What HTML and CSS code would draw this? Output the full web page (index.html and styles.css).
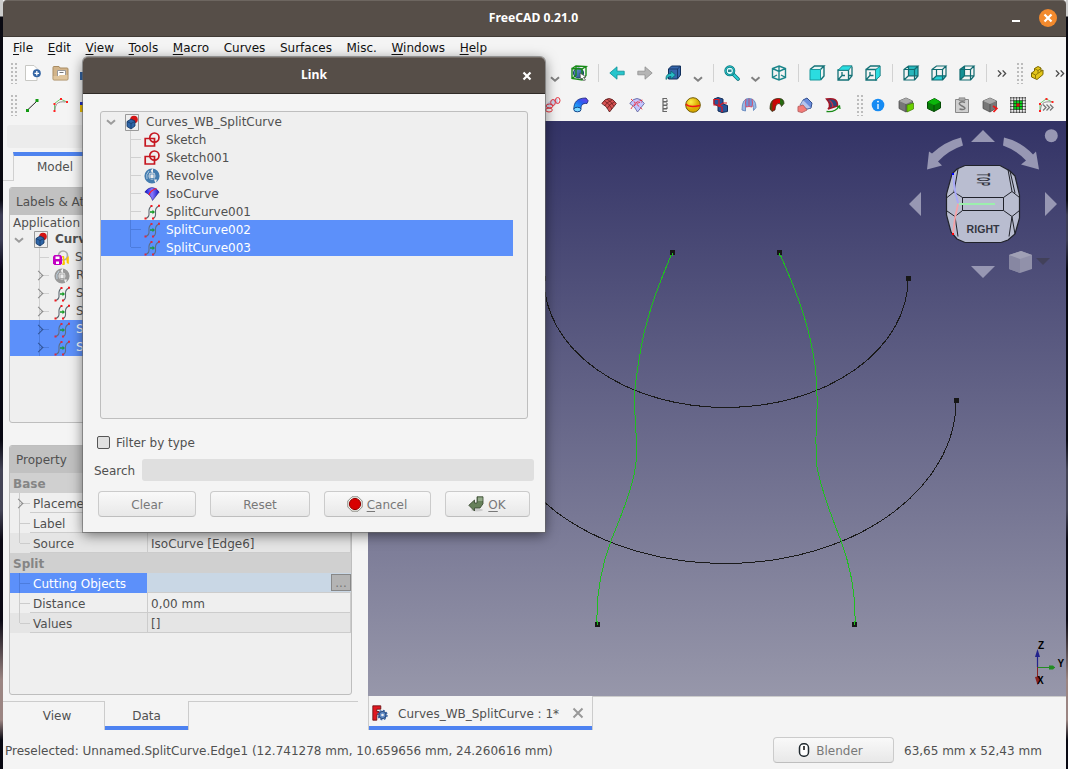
FILE: index.html
```html
<!DOCTYPE html>
<html lang="en">
<head>
<meta charset="utf-8">
<title>FreeCAD 0.21.0</title>
<link rel="stylesheet" href="styles.css">
</head>
<body>
<svg class="defs" width="0" height="0" aria-hidden="true">
  <defs>
    <linearGradient id="gBlue" x1="0" y1="0" x2="1" y2="1"><stop offset="0" stop-color="#6fa0d8"/><stop offset="1" stop-color="#1d4a86"/></linearGradient>
    <linearGradient id="gPipe" x1="0" y1="1" x2="1" y2="0"><stop offset="0" stop-color="#1cc7ff"/><stop offset=".55" stop-color="#2660ee"/><stop offset="1" stop-color="#7c35ea"/></linearGradient>
    <linearGradient id="gIso" x1="0" y1="0" x2="1" y2="0"><stop offset="0" stop-color="#0a10d8"/><stop offset=".5" stop-color="#8a7cff"/><stop offset="1" stop-color="#1014c0"/></linearGradient>
    <linearGradient id="gRedGreen"><stop offset="0" stop-color="#246b08"/><stop offset=".25" stop-color="#c00808"/><stop offset=".7" stop-color="#d00"/><stop offset=".75" stop-color="#276b10"/></linearGradient>
    <radialGradient id="gYellow" cx=".35" cy=".3"><stop offset="0" stop-color="#fff04a"/><stop offset="1" stop-color="#d9a900"/></radialGradient>
  </defs>
  <symbol id="new" viewBox="0 0 16 16"><path d="M.5.500h8.500l3 3v12H.5z" fill="#fff" stroke="#c8c8c4"/><circle cx="11.800" cy="8.300" r="4" fill="#3465a4"/><path d="M11.800 6v4.600M9.500 8.300h4.600" stroke="#fff" stroke-width="1.300"/></symbol>
  <symbol id="open" viewBox="0 0 16 16"><path d="M.5 2.500q0-1 1-1h5l1 1.500h7q1 0 1 1v10q0 1-1 1h-13q-1 0-1-1z" fill="#d2b48a" stroke="#a98c62"/><path d="M5 5.500h8v5H8l-3 2z" fill="#fff" stroke="#999"/><path d="M7 7.500h4" stroke="#777"/><path d="M1 11h5l2-1h7v4.500H1z" fill="#e0c59c"/></symbol>
  <symbol id="save" viewBox="0 0 16 16"><path d="M0 7h15v8H0z" fill="#3465a4"/></symbol>
  <symbol id="line" viewBox="0 0 16 16"><path d="M2.500 13 12 4" stroke="#222"/><path d="M1 12h3v3H1zM10.500 2h3v3h-3z" fill="#129a12"/></symbol>
  <symbol id="bez" viewBox="0 0 16 16"><path d="M2 13.500v-7L8 2l6.500 3" fill="none" stroke="#70c870"/><path d="M2.500 13C3 7 5 4 13 5" fill="none" stroke="#777" stroke-width=".8"/><path d="M1 13h2v2H1zM1 6h2v2H1zM7.500 1h2v2h-2zM13.500 4h2v2h-2z" fill="#f22"/></symbol>
  <symbol id="mixed" viewBox="0 0 16 16"><path d="M0 5h12v3H0z" fill="#2330c8"/><path d="M0 8h12v7H0z" fill="#f2c400"/></symbol>
  <symbol id="chev" viewBox="0 0 10 8"><path d="m1 2.200 4 3.500 4-3.500" fill="none" stroke="#808080" stroke-width="2"/></symbol>
  <symbol id="boxsel" viewBox="0 0 16 16"><circle cx="7.500" cy="8" r="5" fill="url(#gBlue)" stroke="#113a6b"/><path d="M1 3.500 11 4v11L1 13.500zM1 3.500 5 1l10 .5-4 2.500M15 1.500v9L11 15M1 13.500l4-3V1" fill="none" stroke="#178a17" stroke-width="1.400"/><path d="m9 8 6 4-2.500.5 2 2.500-2 .5-1.500-2.500-1.500 1.500z" fill="#fff" stroke="#444" stroke-width=".7"/></symbol>
  <symbol id="left" viewBox="0 0 16 16"><path d="M.8 8 8 1.800V6.200h7.200v3.600H8v4.400z" fill="#27c5cc" stroke="#0b8f96" stroke-width=".8"/></symbol>
  <symbol id="right" viewBox="0 0 16 16"><path d="M15.200 8 8 1.800V6.200H.8v3.600H8v4.400z" fill="#b5b5b5" stroke="#8f8f8f" stroke-width=".8"/></symbol>
  <symbol id="goto" viewBox="0 0 16 16"><path d="m3 4 3-3h9v9l-3 4H3z" fill="#3566ac" stroke="#12305c"/><path d="M3.500 4H12v9.500M12 4l3-3" fill="none" stroke="#12305c" stroke-width=".8"/><path d="M.5 14.500C0 9 4 8.500 5.500 8.500V6l4.500 4-4.500 4v-2.500c-2 0-2.500.5-5 3z" fill="#27bcc4" stroke="#075f68" stroke-width=".7"/></symbol>
  <symbol id="zoomfit" viewBox="0 0 16 16"><path d="m9 9 5 5" stroke="#0c6f76" stroke-width="3.600" stroke-linecap="round"/><path d="m9 9 5 5" stroke="#2bd0d6" stroke-width="2" stroke-linecap="round"/><circle cx="5.800" cy="5.800" r="4.300" fill="#dff" stroke="#0c7a80" stroke-width="2.400"/><circle cx="5.800" cy="5.800" r="4.300" fill="none" stroke="#28c4cb"/><path d="M4 7V4.500h3.500V7z" fill="#2d8790"/></symbol>
  <symbol id="axo" viewBox="0 0 16 16"><path d="m8 1 6.500 2.500v9L8 15l-6.500-2.500v-9zM1.500 3.500 8 6.500l6.500-3M8 6.500V15M8 1v5M1.500 12.500 6 10m8.500 2.500L10 10" fill="none" stroke="#1b868b" stroke-width="1.400"/></symbol>
  <symbol id="front" viewBox="0 0 16 16"><path d="M1 4.500 5.500 1H15l-3.500 3.500M15 1v10l-3.500 4" fill="#e4f4f4" stroke="#147277" stroke-width="1.400"/><path d="M1 4.500h10.500V15H1z" fill="#2bdce0" stroke="#17979b"/></symbol>
  <symbol id="top" viewBox="0 0 16 16"><path d="M1 5h10.500v10H1zM15 1.500v9.300L11.500 15M5 7v3.500L1 15m4-4.500h3m3.500 0H15" fill="none" stroke="#147277" stroke-width="1.300"/><path d="M1 5.300 5.500.8H15l-3.500 4.500z" fill="#2bdce0" stroke="#147277" stroke-width=".8"/></symbol>
  <symbol id="rside" viewBox="0 0 16 16"><path d="M1 4.500h10.500V15H1zM1 4.500 5.500 1H15M5 7v3.500L1 15M5.500 10.500h3" fill="none" stroke="#147277" stroke-width="1.300"/><path d="M10.500 4.800 15.200 1v10l-4.700 4.200z" fill="#2bdce0" stroke="#147277" stroke-width=".8"/></symbol>
  <symbol id="rear" viewBox="0 0 16 16"><path d="M5.500 1H15v9.800H5.500z" fill="#27b7bc"/><path d="M1 4.500h10.500V15H1zM1 4.500 5.500 1H15l-3.500 3.500M15 1v10l-3.500 4M5.500 1v9.800L1 15M5.500 10.800H15" fill="none" stroke="#116b70" stroke-width="1.200"/></symbol>
  <symbol id="bottom" viewBox="0 0 16 16"><path d="m1 15 4.500-4.200H15L11.500 15z" fill="#2bd0d5"/><path d="M1 4.500h10.500V15H1zM1 4.500 5.500 1H15l-3.500 3.500M15 1v10l-3.500 4M5.500 4.500v6.300L1 15M5.500 10.800H15" fill="none" stroke="#116b70" stroke-width="1.200"/></symbol>
  <symbol id="lside" viewBox="0 0 16 16"><path d="M1 4.500 5.500 1v9.800L1 15z" fill="#159095"/><path d="M1 4.500h10.500V15H1zM1 4.500 5.500 1H15l-3.500 3.500M15 1v10l-3.500 4M5.500 1v9.800L1 15M5.500 10.800H15" fill="none" stroke="#116b70" stroke-width="1.200"/></symbol>
  <symbol id="more" viewBox="0 0 12 10"><path d="m1.500 1.500 3.300 3.500-3.300 3.500M6.700 1.500 10 5 6.700 8.500" fill="none" stroke="#4b4b4b" stroke-width="1.500"/></symbol>
  <symbol id="part" viewBox="0 0 16 16"><path d="m2.500 8 3-2V3.500l3.500-2 3 1.500v3l2-1v4.500L8 14.500 2.500 12z" fill="#e4c619" stroke="#7b6800"/><path d="m2.500 8 4 2 6-4M6.500 10v3.500M5.500 3.500 9 5.500l3-2M9 5.500v2.500" fill="none" stroke="#7b6800" stroke-width=".8"/></symbol>
  <symbol id="pipes" viewBox="0 0 16 16"><path d="M3 12C3 8 5 5 13 4" fill="none" stroke="#ccd5ec" stroke-width="5"/><g fill="none" stroke="#e8323c"><ellipse cx="4" cy="13" rx="3.300" ry="2"/><ellipse cx="4.500" cy="9" rx="3.500" ry="2"/><ellipse cx="8" cy="5.500" rx="2.300" ry="3"/><ellipse cx="12.700" cy="3.500" rx="2.300" ry="3"/></g></symbol>
  <symbol id="pipe" viewBox="0 0 16 16"><path d="M.8 12C1 5 4 1 13 1l2.200 2.800L14 6.500C9 6 8 8.500 8 12z" fill="url(#gPipe)" stroke="#102677" stroke-width=".8"/><ellipse cx="4.400" cy="12.500" rx="3.600" ry="2.300" fill="#7bd8ff" stroke="#15488e"/></symbol>
  <symbol id="redsurf" viewBox="0 0 16 16"><path d="M.8 6.500Q4 1.500 8 1.500t7.300 5L8.500 15Q6 9 .8 6.500z" fill="#d65252" stroke="#4f1111" stroke-width=".8"/><path d="M3.500 4Q8 6 11 12M6 2.200Q10 4 13 9.300M3.500 9Q6 5 11 3M6.200 11.500Q8 7 13.500 5" fill="none" stroke="#4f1111" stroke-width=".6"/></symbol>
  <symbol id="bluesurf" viewBox="0 0 16 16"><path d="M.8 6.500Q4 1.500 8 1.500t7.300 5L8.500 15Q6 9 .8 6.500z" fill="#c4c5ff" stroke="#555b98" stroke-width=".8"/><path d="m2 2 12 11M2 12Q6 4 14 3M5 9q4-4 8-4" fill="none" stroke="#ed2937" stroke-width=".9" stroke-dasharray="3 1"/></symbol>
  <symbol id="spring" viewBox="0 0 16 16"><path d="M10 1.500H6v3h4v-2M10 5H6v3h4V6M10 8.500H6v3h4v-2M10 12H6v2.500h4" fill="none" stroke="#666" stroke-width="1.200"/></symbol>
  <symbol id="ball" viewBox="0 0 16 16"><circle cx="8" cy="8" r="7.300" fill="url(#gYellow)" stroke="#725b05"/><path d="M1 7q3 4 14 1.500" fill="none" stroke="#f01818" stroke-width="1.500"/></symbol>
  <symbol id="cubes" viewBox="0 0 16 16"><path d="m1 2 4-1.500 5 1.500v5l4.500 1.500v6L9 15.500 5 14V9L1 7z" fill="#28549a" stroke="#142c57"/><path d="M1 2.500h5V8H1zM6 9l4-3h4M5 9l4 1v5" fill="none" stroke="#df1720" stroke-width="1.200"/></symbol>
  <symbol id="bluearc" viewBox="0 0 16 16"><path d="M1 13Q1 1 8 1.500q7 0 7 9l-2.500 3q0-7-2-5.500L5.500 8Q4 9 4.500 14z" fill="#9ab9e6" stroke="#6d8fc2"/><path d="M5 2q-1 4 0 8 3-1 6 0 1-4 0-8M8 1.500v8" fill="#6d94dc" stroke="#e23c56" stroke-width=".8"/></symbol>
  <symbol id="redpipe" viewBox="0 0 16 16"><path d="M1 12C1 4 4 1.500 10 1.500q5 0 5 5l-2.500 3Q12 6 9 6.500 6 8 6 13l-3 1.500z" fill="url(#gRedGreen)" stroke="#2b250c" stroke-width=".7"/></symbol>
  <symbol id="blend" viewBox="0 0 16 16"><path d="m6 3 4-2 5 5-1 5-4 1z" fill="#6a8ddd" stroke="#34508d"/><path d="M6 3 3 8l7 4 4-1" fill="#b6c5ed" stroke="#4b67a5" stroke-width=".7"/><path d="M1 9.500 6 8l4 5-5 2.500-4-1z" fill="#f47b78" stroke="#b66"/></symbol>
  <symbol id="sweep" viewBox="0 0 16 16"><path d="M1.500 2Q13 0 12.500 9L3 12Q7 8 1.500 2z" fill="#29497e" stroke="#a31525" stroke-width="1.500"/><path d="M4.500 3.500q4 3 3 6.500" fill="none" stroke="#bd304b" stroke-width="1.500"/><path d="M1.500 14.500q9 1 12.500-5M12 10l2.500-1 .5 3" fill="none" stroke="#188a16" stroke-width="1.300"/></symbol>
  <symbol id="info" viewBox="0 0 16 16"><circle cx="8" cy="8" r="6.300" fill="#168bf3"/><path d="M8 7v5" stroke="#fff" stroke-width="1.300"/><circle cx="8" cy="4.600" r=".9" fill="#fff"/></symbol>
  <symbol id="gcube" viewBox="0 0 16 16"><path d="m1 4 7-3 6.500 3v7L8 15l-7-3.500z" fill="#777" stroke="#444" stroke-width=".7"/><path d="m1 4 7 3 6.500-3L8 1z" fill="#aaa"/><path d="M8 7v8" stroke="#444" stroke-width=".7"/></symbol>
  <symbol id="gcubeface" viewBox="0 0 16 16"><use href="#gcube"/><path d="m9 8 6.500-2v6L9 15z" fill="#6bd000" stroke="#3c7f00" stroke-width=".7"/></symbol>
  <symbol id="greencube" viewBox="0 0 16 16"><path d="m1.500 5 7-3.500L14.500 5v6L8 14.500l-6.500-3z" fill="#087c08" stroke="#054b05"/><path d="M1.500 5 8 8l6.500-3-6-3.500z" fill="#0bb70b"/><path d="M8 8v6.500" stroke="#054b05"/></symbol>
  <symbol id="clip" viewBox="0 0 16 16"><path d="M1.500 2.500h13v13h-13z" fill="#cfcfcf" stroke="#888"/><path d="M5 .8h6v2.700H5z" fill="#aaa" stroke="#777" stroke-width=".6"/><path d="M11 5.500Q8 4 6 5.500T8 9t2.500 3T5.500 12" fill="none" stroke="#777" stroke-width="1.500"/></symbol>
  <symbol id="gcubered" viewBox="0 0 16 16"><use href="#gcube"/><path d="m11 9 3.800 2.500L11.500 15" fill="none" stroke="#f01818" stroke-width="1.800"/></symbol>
  <symbol id="grid" viewBox="0 0 16 16"><path d="M.5.5h15v15H.5z" fill="#eee"/><path d="M3.500 3.500h9v9h-9z" fill="#0cdb20"/><path d="M.8 0v16M3.700 0v16M6.600 0v16M9.500 0v16M12.400 0v16M15.300 0v16M0 .8h16M0 3.700h16M0 6.600h16M0 9.500h16M0 12.400h16M0 15.300h16" stroke="#111" stroke-width=".6"/><path d="M6.500 6.500h3v3h-3z" fill="#e01010"/></symbol>
  <symbol id="bezmore" viewBox="0 0 16 16"><use href="#bez"/><path d="m5 7.500 3 3-3 3M8.500 7.500l3 3-3 3M12 7.500l3 3-3 3" fill="none" stroke="#777" stroke-width="1.300"/></symbol>
  <symbol id="doc" viewBox="0 0 14 17"><path d="M.5.500h13v16H.5z" fill="#eee" stroke="#999"/><circle cx="9" cy="5.500" r="3.800" fill="#d41414"/><path d="m2 7.500 4-2.500 4 2v5L6 15l-4-2.500z" fill="#2e65a7" stroke="#12335f" stroke-width=".8"/><path d="m2 7.500 4 2 4-2M6 9.500v5" fill="none" stroke="#12335f" stroke-width=".7"/></symbol>
  <symbol id="sketch" viewBox="0 0 16 16"><path d="M1.200 6.500h9.300V14H1.200z" fill="none" stroke="#c61720" stroke-width="1.700"/><circle cx="10.400" cy="5.600" r="4.600" fill="none" stroke="#c61720" stroke-width="1.700"/></symbol>
  <symbol id="revolve" viewBox="0 0 16 16"><circle cx="8" cy="8" r="5.500" fill="none" stroke="currentColor" stroke-width="4.200"/><path d="M9 0v5L6.500 3zM11.500 15.500l-1.500-4h3z" fill="#efefef"/><path d="M6 6h4v4.500H6z" fill="#eee" stroke="currentColor" stroke-width=".8"/><path d="M3 11Q1.500 6 5 3" fill="none" stroke="#c5dcee" stroke-width=".8"/></symbol>
  <symbol id="iso" viewBox="0 0 16 16"><path d="M.8 6Q4 1.500 8 1.500T15.200 6L8.500 14.500Q7 9 .8 6z" fill="url(#gIso)" stroke="#12106d" stroke-width=".5"/><path d="M5 9Q6 4.500 12.500 2.500" fill="none" stroke="#ff1d2d" stroke-width="1.300"/></symbol>
  <symbol id="split" viewBox="0 0 16 16"><path d="M1.500 14.500q4-1 3.500-6T8 2M9 14.500q3-1 2.500-6T15 2" fill="none" stroke="#5c6870" stroke-width="1.100"/><path d="M6 8h3" stroke="#159b26" stroke-width="1.600"/><path d="M8.500 5.800v4.400L11 8z" fill="#159b26"/><path d="M.5 13.500h2v2h-2zM6.500 1h2v2h-2zM8 13.500h2v2H8zM14 .8h2v2h-2z" fill="#f21820"/></symbol>
  <symbol id="hidden" viewBox="0 0 16 16"><circle cx="10" cy="5.500" r="4.500" fill="none" stroke="#aaa" stroke-width="1.700"/><path d="M1.500 5h6l1.500 1.500v7L7.500 15h-6L0 13.500v-7z" fill="#c100c1"/><path d="M2.500 6.500h4V9h-4zM3 11.500h3V14H3z" fill="#fff"/><path d="M9 6q2 4 0 9h2.500q1-2 0-4 0-3-.5-5zM15.800 6q-4 3-2 5-1 2 2 3" fill="#ffc500"/></symbol>
  <symbol id="fclogo" viewBox="0 0 16 16"><path d="M.8.8h8v3.400H4.800v2.300H7v3.200H4.800v5.500h-4z" fill="#e11820" stroke="#630b0e" stroke-width=".8"/><circle cx="10.500" cy="10" r="3.500" fill="#5e88c4" stroke="#24477b" stroke-width="1.200"/><circle cx="10.500" cy="10" r="4.500" fill="none" stroke="#3d65a4" stroke-width="1.400" stroke-dasharray="2 1.500"/><circle cx="10.500" cy="10" r="1.300" fill="#eee"/></symbol>
  <symbol id="cancel" viewBox="0 0 16 16"><path d="M5 .8h6L15.200 5v6L11 15.200H5L.8 11V5z" fill="#f5f5f0" stroke="#8c8c86"/><circle cx="8" cy="8" r="5.600" fill="#d80000" stroke="#950000"/></symbol>
  <symbol id="ok" viewBox="0 0 16 16"><ellipse cx="9" cy="14" rx="6" ry="1.500" fill="#ccc"/><path d="M9 .8h6v7L12 12H6.500v3L.8 9.300 6.500 4v3H9z" fill="#66805a" stroke="#33432c" stroke-width=".8"/><path d="M10 1.500h4.500V5H10z" fill="#93a989"/></symbol>
  <symbol id="mouse" viewBox="0 0 12 16"><rect x="1.500" y="1.800" width="9" height="12.400" rx="4" fill="#fff" stroke="#222b30" stroke-width="1.500"/><path d="M6 4v4" stroke="#333" stroke-width="1.800"/></symbol>
</svg>

<div class="window">
  <header class="titlebar">
    <span class="title">FreeCAD 0.21.0</span>
    <span class="minimize"></span>
    <span class="close"><svg viewBox="0 0 10 10"><path d="m1.500 1.500 7 7m0-7-7 7" stroke="#fff" stroke-width="2.200"/></svg></span>
  </header>
  <nav class="menubar">
    <span><u>F</u>ile</span><span><u>E</u>dit</span><span><u>V</u>iew</span><span><u>T</u>ools</span><span><u>M</u>acro</span><span>Curves</span><span>Surfaces</span><span>Misc.</span><span><u>W</u>indows</span><span><u>H</u>elp</span>
  </nav>
  <div class="toolbar first">
    <i class="grip lead"></i>
    <svg class="tool"><use href="#new"/></svg><svg class="tool snug"><use href="#open"/></svg><svg class="tool"><use href="#save"/></svg>
    <div class="right-tools">
      <svg class="drop"><use href="#chev"/></svg><svg class="tool"><use href="#boxsel"/></svg><i class="sep"></i>
      <svg class="tool"><use href="#left"/></svg><svg class="tool"><use href="#right"/></svg><svg class="tool wide"><use href="#goto"/></svg><svg class="drop"><use href="#chev"/></svg><i class="sep"></i>
      <svg class="tool"><use href="#zoomfit"/></svg><svg class="drop narrow"><use href="#chev"/></svg><svg class="tool"><use href="#axo"/></svg><i class="sep"></i>
      <svg class="tool"><use href="#front"/></svg><svg class="tool"><use href="#top"/></svg><svg class="tool"><use href="#rside"/></svg><i class="sep"></i>
      <svg class="tool"><use href="#rear"/></svg><svg class="tool"><use href="#bottom"/></svg><svg class="tool"><use href="#lside"/></svg><i class="sep"></i>
      <svg class="more"><use href="#more"/></svg><i class="grip"></i><svg class="tool tight"><use href="#part"/></svg><svg class="more end"><use href="#more"/></svg>
    </div>
  </div>
  <div class="toolbar second">
    <i class="grip lead"></i>
    <svg class="tool"><use href="#line"/></svg><svg class="tool snug"><use href="#bez"/></svg><svg class="tool"><use href="#mixed"/></svg>
    <div class="right-tools curves">
      <svg class="tool"><use href="#pipes"/></svg><svg class="tool"><use href="#pipe"/></svg><svg class="tool"><use href="#redsurf"/></svg><svg class="tool"><use href="#bluesurf"/></svg><svg class="tool"><use href="#spring"/></svg><svg class="tool"><use href="#ball"/></svg><svg class="tool"><use href="#cubes"/></svg><svg class="tool"><use href="#bluearc"/></svg><svg class="tool"><use href="#redpipe"/></svg><svg class="tool"><use href="#blend"/></svg><svg class="tool"><use href="#sweep"/></svg>
      <i class="grip mid"></i>
      <svg class="tool"><use href="#info"/></svg><svg class="tool"><use href="#gcubeface"/></svg><svg class="tool"><use href="#greencube"/></svg><svg class="tool"><use href="#clip"/></svg><svg class="tool"><use href="#gcubered"/></svg><svg class="tool"><use href="#grid"/></svg><svg class="tool"><use href="#bezmore"/></svg>
    </div>
  </div>
  <main class="work">
    <aside class="dock">
      <div class="combo-title"></div>
      <div class="dock-tabs"><span class="dock-tab">Model</span></div>
      <section class="panel labels">
        <h2>Labels &amp; Attributes</h2>
        <div class="app">Application</div>
        <ul class="model-tree">
          <li class="root"><svg class="open-mark"><use href="#chev"/></svg><svg class="ico"><use href="#doc"/></svg><b>Curves</b></li>
          <li><svg class="ico"><use href="#hidden"/></svg>Sketch</li>
          <li class="fold"><svg class="ico gray"><use href="#revolve"/></svg>Revolve</li>
          <li class="fold"><svg class="ico"><use href="#split"/></svg>Split</li>
          <li class="fold"><svg class="ico"><use href="#split"/></svg>Split</li>
          <li class="fold on"><svg class="ico"><use href="#split"/></svg>Split</li>
          <li class="fold on"><svg class="ico"><use href="#split"/></svg>Split</li>
        </ul>
      </section>
      <section class="panel props">
        <h2>Property</h2>
        <div class="group">Base</div>
        <div class="prop fold"><span>Placement</span><span></span></div>
        <div class="prop"><span>Label</span><span></span></div>
        <div class="prop alt last"><span>Source</span><span>IsoCurve [Edge6]</span></div>
        <div class="group">Split</div>
        <div class="prop active"><span>Cutting Objects</span><span><button>...</button></span></div>
        <div class="prop"><span>Distance</span><span>0,00 mm</span></div>
        <div class="prop alt last"><span>Values</span><span>[]</span></div>
      </section>
      <div class="bottom-tabs"><span class="view">View</span><span class="data">Data</span><span class="rest"></span></div>
    </aside>
    <section class="mdi">
      <svg class="scene" viewBox="368 121 698 575">
        <g fill="none" shape-rendering="crispEdges">
          <path d="M544 279A182 128.500 0 0 0 908 279M494 401A231 162.500 0 0 0 956 401" stroke="#1a1a1a"/>
          <path d="M672 253C660 282 645 317 639 360 634 390 634 397 635 415 636 435 637 443 636.500 457 635 486 618 522 611 541 602 565 596 590 597 624M779.500 253C792 282 809 320 815 365 818 389 817 397 817 412 815 440 816 455 817 467 822 494 834 522 841 541 850 565 856 590 855 624" stroke="#1fc01f"/>
        </g>
        <path d="M670 250h5v5h-5zM777 250h5v5h-5zM906 276h5v5h-5zM954 398h5v5h-5zM595 622h5v5h-5zM852 622h5v5h-5zM541 276h5v5h-5z" fill="#171717"/>
        <path d="M672.500 253v3M779.500 253v3M597.500 621v4M854.500 621v4" stroke="#1fc01f"/>
        <g fill="#9797b3">
          <path d="m971 142 12-12 12 12zM909 204l12-12v24zM1045 192v24l12-12zM971 266h24l-12 12z"/>
          <circle cx="1051.300" cy="135.700" r="6.500"/>
          <path d="M961 137.500q-16 4-29 16l-3-2-2 18 15-4-4-4q10-11 25-16zM1004 137.500q17 4 29 17l3-3 3 18-18-5 5-4q-9-10-23-15z"/>
        </g>
        <path d="M965 165.500h35l10 5.500 5 5 4.500 19v23l-4.500 16-7 6-7 2.500h-36l-8-3.500-6-7-4.500-17v-21l5.500-20 5-5z" fill="#b9bdd0" stroke="#20222a" stroke-width="1.200"/>
        <path d="M962.500 197.500h41v13h-41zM962.500 197.500 954 192l-7 5.500M954 192l4-23M962.500 210.500l-7.500 6-8-5.500M955 216.500l3 20M1003.500 197.500l8.500-6 7.500 6M1012 191.500l-4-22M1003.500 210.500l8.500 6 7.500-6M1012 216.500l-3 20M1010 171l5 22M1015 234l-3-17" fill="none" stroke="#20222a"/>
        <path d="m953 174 2 17 3 12" fill="none" stroke="#a9a9fb" stroke-width="1.800"/>
        <path d="m958 204-3 14-2 16" fill="none" stroke="#f6a3a8" stroke-width="1.800"/>
        <path d="M959 204h36" stroke="#9cefad" stroke-width="1.800"/>
        <path d="M952 173h2v2h-2z" fill="#00f"/><path d="M952 233h2v2h-2z" fill="red"/>
        <text class="face" x="983" y="232.500" textLength="33">RIGHT</text>
        <text class="face" transform="translate(976.500 179.500) rotate(90) scale(.5 1.700)" textLength="25">TOP</text>
        <path d="m1009 255 12-4 11 4v14l-12 4-11-4z" fill="#9191aa"/><path d="m1009 255 11 3v15l-11-4z" fill="#8787a2"/><path d="m1009 255 12-4 11 4-12 4z" fill="#a0a0b5"/>
        <path d="M1036 258h14l-7 7z" fill="#42415a"/>
        <path d="M1037.500 667v-14" stroke="#23238c" stroke-width="1.200"/><path d="m1035 657 2.500-8 2.500 8z" fill="#23238c"/>
        <path d="M1038 667.500h17" stroke="#238c23"/><path d="M1049 665.500h4l2 2-2 2h-4z" fill="#238c23"/>
        <path d="M1037.500 667v14" stroke="#872222"/><path d="m1035 677 5-1v5l-2.500 4z" fill="#872222"/>
        <g class="axis"><text x="1038" y="649">Z</text><text x="1057.500" y="667">Y</text><text x="1037" y="684">X</text></g>
      </svg>
      <div class="doc-tabs"><div class="doc-tab"><svg class="ico"><use href="#fclogo"/></svg><span>Curves_WB_SplitCurve : 1*</span><svg class="tab-close" viewBox="0 0 12 12"><path d="m1.500 1.500 9 9m0-9-9 9" stroke="#999" stroke-width="2"/></svg></div></div>
    </section>
  </main>
  <footer class="status">
    <span class="message">Preselected: Unnamed.SplitCurve.Edge1 (12.741278 mm, 10.659656 mm, 24.260616 mm)</span>
    <button class="push nav-style"><svg><use href="#mouse"/></svg><span>Blender</span></button>
    <span class="dims">63,65 mm x 52,43 mm</span>
  </footer>
</div>

<div class="dialog">
  <header class="dialog-title"><span class="title">Link</span><svg viewBox="0 0 10 10"><path d="m1.500 1.500 7 7m0-7-7 7" stroke="#fff" stroke-width="2.200"/></svg></header>
  <div class="dialog-body">
    <ul class="link-tree">
      <li class="root"><svg class="open-mark"><use href="#chev"/></svg><svg class="ico"><use href="#doc"/></svg>Curves_WB_SplitCurve</li>
      <li><svg class="ico"><use href="#sketch"/></svg>Sketch</li>
      <li><svg class="ico"><use href="#sketch"/></svg>Sketch001</li>
      <li><svg class="ico blue"><use href="#revolve"/></svg>Revolve</li>
      <li><svg class="ico"><use href="#iso"/></svg>IsoCurve</li>
      <li><svg class="ico"><use href="#split"/></svg>SplitCurve001</li>
      <li class="on"><svg class="ico"><use href="#split"/></svg>SplitCurve002</li>
      <li class="on"><svg class="ico"><use href="#split"/></svg>SplitCurve003</li>
    </ul>
    <div class="filter"><i class="check"></i><span>Filter by type</span></div>
    <div class="search"><span>Search</span><i class="field"></i></div>
    <div class="buttons">
      <button class="push clear"><span>Clear</span></button><button class="push reset"><span>Reset</span></button><button class="push cancel"><svg><use href="#cancel"/></svg><span><u>C</u>ancel</span></button><button class="push ok"><svg><use href="#ok"/></svg><span><u>O</u>K</span></button>
    </div>
  </div>
</div>
</body>
</html>
```
FILE: styles.css
```css
* { box-sizing: border-box; }
body {
  margin: 0; width: 1068px; height: 769px; overflow: hidden;
  background: linear-gradient(#ccc 0 16px, #090911 17px 200px, #3d3d55 215px 240px, #080812 270px 440px, #444456 470px 510px, #0b0914 540px 620px, #9b8582 680px 720px, #080812 740px);
  font: 12px/18px "DejaVu Sans", sans-serif; color: #505050;
}
ul { list-style: none; margin: 0; padding: 0; }
button { font: inherit; color: inherit; }
.defs { position: absolute; }
.window { width: 1063px; height: 769px; margin-left: 3px; background: #f4f4f4; display: flex; flex-direction: column; }
.titlebar { height: 37px; flex: none; background: #564e48; border-top: 1px solid #6d6660; border-bottom: 1px solid #403a35; display: grid; grid-template-columns: 1fr 24px 30px; align-items: center; border-radius: 4px 4px 0 0; }
.title { font: bold 12.200px "Noto Sans", sans-serif; color: #fff; text-align: center; position: relative; top: -1px; }
.titlebar .title { padding-left: 52px; }
.minimize { width: 8px; height: 2px; background: #fff; margin-top: 5px; }
.close { width: 18px; height: 18px; border-radius: 50%; background: #f28a2e; display: grid; place-items: center; margin-left: 3px; margin-top: -1px; }
.close svg { width: 10px; height: 10px; }
.menubar { height: 21px; flex: none; display: flex; gap: 14.600px; padding: 2px 0 0 10px; color: #111; }
u { text-underline-offset: 2px; }
.toolbar { height: 30px; flex: none; display: flex; align-items: center; }
.toolbar.second { height: 33px; }
.tool { width: 28px; height: 16px; flex: none; }
.tool.snug { width: 27px; }
.tool.wide { width: 29px; }
.tool.tight { width: 22px; }
.right-tools { display: flex; align-items: center; margin-left: auto; }
.right-tools.curves { padding-right: 6px; }
.drop { width: 20px; height: 8px; margin-top: 12px; }
.drop.narrow { width: 19px; }
.sep { width: 10px; height: 18px; background: linear-gradient(90deg, transparent 5px, #d2d2d2 5px 6px, transparent 6px); }
.more { width: 22px; height: 9px; }
.more.end { width: 12px; margin-left: 6px; }
.grip { width: 13px; height: 22px; background: radial-gradient(circle, #bcbcbc 1px, transparent 1.200px) 3px 0 / 4px 4px repeat-y, radial-gradient(circle, #bcbcbc 1px, transparent 1.200px) 7px 0 / 4px 4px repeat-y; }
.grip.lead { width: 16px; background-position: 7px 0, 11px 0; }
.grip.mid { width: 17px; background-position: 9px 0, 13px 0; }
.work { display: flex; height: 609px; flex: none; }
.dock { width: 365px; display: flex; flex-direction: column; }
.combo-title { height: 23px; margin: 4px 10px 4px 4px; background: #ececec; border-radius: 3px; flex: none; }
.dock-tabs { height: 29px; flex: none; padding-left: 10px; background: linear-gradient(#d0d0d0, #d0d0d0) 0 28px / 10px 1px no-repeat; }
.dock-tab { display: block; height: 29px; width: 100px; border-top: 4px solid #4e83ef; border-left: 1px solid #d0d0d0; padding: 2px 0 0 23px; }
.panel { margin: 6px 16px 0 6px; border: 1px solid #bebebe; border-radius: 3px; background: #efefef; overflow: hidden; flex: none; }
.panel h2 { margin: 0; height: 27px; padding: 5px 6px 0; background: #c1c1c1; font: inherit; }
.panel.labels { height: 236px; }
.panel.props { height: 250px; margin-top: 22px; }
.app { height: 15px; line-height: 17px; padding-left: 3px; }
.model-tree li, .link-tree li { height: 18px; display: flex; align-items: center; }
.model-tree li { padding-top: 1px; line-height: 19px; }
.link-tree li { padding-top: 2px; }
.ico { width: 16px; height: 16px; flex: none; margin-right: 6px; }
.open-mark { width: 10px; height: 8px; opacity: .75; }
.root .ico { width: 14px; height: 17px; }
.model-tree .root { padding-left: 4px; }
.model-tree .root .open-mark { margin-right: 10px; }
.model-tree .root .ico { margin-right: 7px; }
.model-tree li:not(.root) { padding-left: 43px; background: linear-gradient(#d0d0d0, #d0d0d0) 29px 0 / 1px 18px no-repeat, linear-gradient(#d0d0d0, #d0d0d0) 30px 9px / 9px 1px no-repeat; }
.model-tree li:not(.root) .ico { margin: 0 6px 0 0; }
.model-tree .fold::before { content: ""; width: 6px; height: 6px; border: solid #888; border-width: 1.500px 1.500px 0 0; transform: rotate(45deg); margin: 0 12px 0 -18px; }
.model-tree li.on, .link-tree li.on { background-color: #5c90fa; color: #fff; background-image: linear-gradient(#4c7cdd, #4c7cdd), linear-gradient(#4c7cdd, #4c7cdd); }
.model-tree .fold.on::before { border-color: #315496; }
.on .ico { opacity: .85; }
.gray { color: #999; }
.blue { color: #447caf; }
.group { height: 20px; background: #d0d0d0; color: #858585; font-weight: bold; line-height: 22px; padding-left: 3px; }
.prop { display: grid; grid-template-columns: 114px 204px; padding-left: 23px; height: 20px; line-height: 22px; position: relative; background: linear-gradient(#ccc, #ccc) 9px 0 / 1px 20px no-repeat, linear-gradient(#ccc, #ccc) 10px 10px / 10px 1px no-repeat; }
.prop span { border-bottom: 1px solid #ccc; height: 20px; }
.prop span:first-child { border-right: 1px solid #ccc; margin-left: -3px; padding-left: 3px; margin-right: -1px; }
.prop span:last-child { padding-left: 4px; border-right: 1px solid #ccc; }
.prop.alt { background-color: #e5e5e5; }
.prop.last { background-size: 1px 10px, 10px 1px; }
.prop.fold::before { content: ""; position: absolute; left: 5px; top: 7px; width: 6px; height: 6px; border: solid #888; border-width: 1.500px 1.500px 0 0; transform: rotate(45deg); }
.prop.active { background-color: #5c90fa; background-image: linear-gradient(#4c7cdd, #4c7cdd), linear-gradient(#4c7cdd, #4c7cdd); color: #fff; }
.prop.active span:first-child { border-color: #5c90fa; }
.prop.active span:last-child { background: #c9d7e5; display: flex; justify-content: flex-end; border-right: 0; }
.prop button { width: 20px; height: 17px; margin-top: 1px; padding: 0; border: 1px solid #888; background: #b4b4b4; color: #777; line-height: 14px; }
.bottom-tabs { display: grid; grid-template-columns: 101px 85px 169px; height: 29px; margin-top: 6px; text-align: center; line-height: 28px; flex: none; }
.bottom-tabs span { border-top: 1px solid #ccc; height: 29px; }
.bottom-tabs .view { padding-left: 7px; }
.bottom-tabs .data { border: 1px solid #ccc; border-width: 0 1px 0; background: linear-gradient(#4d82f1, #4d82f1) 0 100% / 100% 4px no-repeat; line-height: 30px; }
.mdi { width: 698px; }
.scene { display: block; width: 698px; height: 575px; background: linear-gradient(#333366, #9797aa); }
.face { font: bold 10.500px "Liberation Sans", sans-serif; text-anchor: middle; fill: #333640; }
.axis { font: bold 10px "Liberation Sans", sans-serif; fill: #000; }
.doc-tabs { height: 34px; border-top: 1px solid #ccc; }
.doc-tab { width: 225px; height: 34px; margin-top: -1px; border: 1px solid #ccc; border-width: 0 1px; background: #f4f4f4 linear-gradient(#4d82f1, #4d82f1) 0 100% / 100% 4px no-repeat; display: flex; align-items: center; padding-left: 3px; }
.doc-tab span { padding-top: 2px; }
.doc-tab .ico { margin-right: 10px; }
.tab-close { width: 12px; height: 12px; margin-left: 13px; }
.status { flex: 1; display: flex; align-items: center; padding: 1px 0 0 2px; }
.message { width: 768px; white-space: nowrap; padding-top: 2px; }
.push { height: 26px; border: 1px solid #cbcbcb; border-bottom-color: #bebebe; border-radius: 4px; background: linear-gradient(#f9f9f9, #e8e8e8); color: #787878; display: flex; align-items: center; justify-content: center; padding: 0; }
.push span { padding-top: 2px; }
.push svg { width: 16px; height: 16px; margin-right: 4px; margin-left: -1px; }
.nav-style { width: 121px; }
.nav-style svg { width: 12px; margin: 0 6px 0 -6px; }
.dims { margin-left: 10px; padding-top: 2px; }
.dialog { position: absolute; left: 83px; top: 57px; width: 462px; height: 475px; background: #f4f4f4; border-radius: 5px 5px 0 0; box-shadow: 0 0 0 1px #6669, 0 3px 13px #0008; }
.dialog-title { height: 37px; background: #564e48; border-top: 1px solid #746c66; border-bottom: 1px solid #302b27; border-radius: 5px 5px 0 0; display: grid; grid-template-columns: 1fr 10px; align-items: center; padding-right: 13px; }
.dialog-title .title { padding-left: 23px; }
.dialog-title svg { width: 10px; height: 10px; }
.dialog-body { padding: 17px 11px 0; }
.link-tree { margin: 0 6px; height: 308px; border: 1px solid #bebebe; border-radius: 3px; background: #efefef; padding-right: 14px; }
.link-tree .root { padding-left: 5px; }
.link-tree .root .open-mark { margin-right: 9px; }
.link-tree .root .ico { margin-right: 7px; }
.link-tree li:not(.root) { padding-left: 43px; background-image: linear-gradient(#d0d0d0, #d0d0d0), linear-gradient(#d0d0d0, #d0d0d0); background-size: 1px 18px, 10px 1px; background-position: 29px 0, 30px 9px; background-repeat: no-repeat; }
.link-tree li.on:not(.root) { background-image: linear-gradient(#4c7cdd, #4c7cdd), linear-gradient(#4c7cdd, #4c7cdd); }
.link-tree li:last-child { background-size: 1px 9px, 10px 1px; }
.filter { display: flex; align-items: center; height: 18px; margin: 14px 0 0 3px; }
.filter span { padding-top: 2px; }
.check { width: 13px; height: 13px; border: 1px solid #555; border-radius: 2px; background: #e0e0e0; margin-right: 6px; }
.search { display: grid; grid-template-columns: 48px 392px; align-items: center; margin-top: 8px; }
.search span { padding-top: 2px; }
.field { height: 22px; border-radius: 3px; background: #dfdfdf; }
.buttons { display: flex; gap: 14px; margin: 10px 0 0 4px; }
.clear { width: 98px; }
.reset { width: 100px; }
.cancel { width: 107px; }
.ok { width: 85px; }
```
